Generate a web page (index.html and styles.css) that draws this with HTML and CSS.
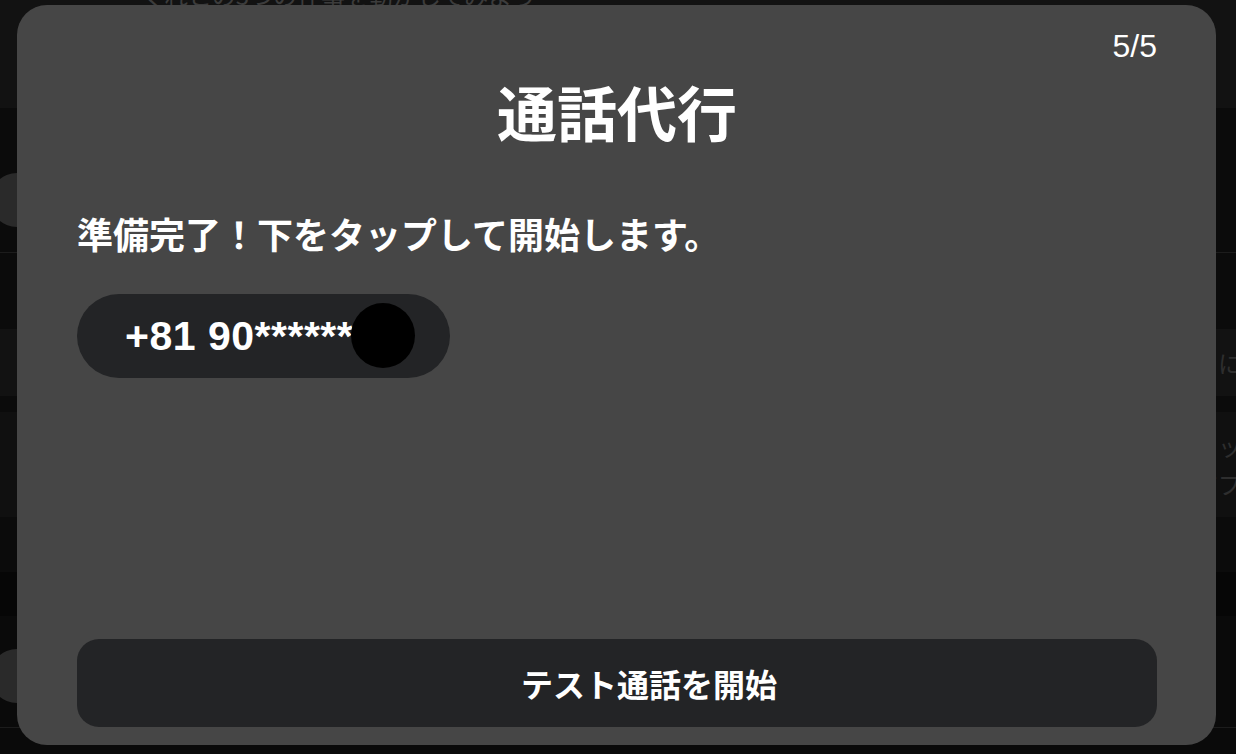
FILE: index.html
```html
<!DOCTYPE html>
<html lang="ja">
<head>
    <meta charset="UTF-8">
    <meta name="viewport" content="width=device-width, initial-scale=1.0">
    <title>通話代行</title>
    <link rel="stylesheet" href="styles.css">
</head>
<body>
    <div class="page">
        <div class="page-top">
            <p class="page-top-text">くれとの3つの仕事を動かしてみよう</p>
        </div>
        <div class="page-row page-row-first">
            <div class="avatar"></div>
        </div>
        <div class="page-gap"></div>
        <div class="page-band page-band-small">
            <span class="band-text">には</span>
        </div>
        <div class="page-gap page-gap-thin"></div>
        <div class="page-band page-band-large">
            <span class="band-text">タッチ</span>
            <span class="band-text">アプリ</span>
        </div>
        <div class="page-gap page-gap-mid"></div>
        <div class="page-band page-band-dark"></div>
        <div class="page-row page-row-last">
            <div class="avatar"></div>
        </div>
    </div>

    <div class="modal">
        <div class="modal-head">
            <span class="step-count">5/5</span>
        </div>
        <h1 class="modal-title">通話代行</h1>
        <p class="modal-text">準備完了！下をタップして開始します。</p>
        <div class="phone-pill">
            <span class="phone-number">+81 90******</span>
            <span class="phone-dot"></span>
        </div>
        <button class="start-btn">テスト通話を開始</button>
    </div>
</body>
</html>
```

FILE: styles.css
```css
* {
    box-sizing: border-box;
    margin: 0;
    padding: 0;
}

body {
    background: #0a0a0a;
    font-family: "Noto Sans CJK JP", "Liberation Sans", sans-serif;
    color: #fff;
    overflow: hidden;
    height: 754px;
}

/* page behind the modal */
.page {
    display: flex;
    flex-direction: column;
}

.page-top {
    height: 108px;
    background: #121212;
    padding-left: 140px;
    overflow: hidden;
}

.page-top-text {
    margin-top: -20px;
    font-size: 24px;
    line-height: 30px;
    color: #3c3c3c;
}

.page-row {
    position: relative;
    border-bottom: 1px solid #1c1c1c;
}

.page-row-first {
    height: 145px;
    background: #0b0b0b;
}

.page-row-last {
    height: 112px;
    background: #0a0a0a;
}

.avatar {
    position: absolute;
    left: -10px;
    width: 54px;
    height: 54px;
    border-radius: 50%;
    background: #2a2a2a;
}

.page-row-first .avatar {
    top: 65px;
}

.page-row-last .avatar {
    top: 33px;
}

.page-gap {
    height: 76px;
    background: #0b0b0b;
}

.page-gap-thin {
    height: 16px;
}

.page-gap-mid {
    height: 55px;
}

.page-band {
    display: flex;
    flex-direction: column;
    justify-content: center;
    align-items: flex-end;
    gap: 8px;
    margin-right: -30px;
}

.page-band-small {
    height: 67px;
    background: #121212;
}

.page-band-large {
    height: 105px;
    background: #101010;
}

.page-band-dark {
    height: 44px;
    background: #060606;
}

.band-text {
    font-size: 24px;
    line-height: 30px;
    color: #2e2e2e;
}

/* modal */
.modal {
    position: fixed;
    top: 5px;
    left: 17px;
    width: 1199px;
    height: 740px;
    background: #464646;
    border-radius: 30px;
    padding: 23px 59px 18px 60px;
    display: flex;
    flex-direction: column;
    align-items: flex-start;
}

.modal-head {
    width: 100%;
    display: flex;
    justify-content: flex-end;
}

.step-count {
    font-family: "Liberation Sans", sans-serif;
    font-size: 32px;
    line-height: 36px;
    color: #fff;
}

.modal-title {
    align-self: center;
    margin-top: 11px;
    font-size: 60px;
    line-height: 72px;
    font-weight: 700;
}

.modal-text {
    margin-top: 65px;
    font-size: 36px;
    line-height: 43px;
    font-weight: 700;
}

.phone-pill {
    position: relative;
    margin-top: 39px;
    width: 373px;
    height: 84px;
    padding-left: 48px;
    display: flex;
    align-items: center;
    background: #232426;
    border-radius: 42px;
}

.phone-number {
    font-family: "Liberation Sans", sans-serif;
    font-size: 41px;
    font-weight: 700;
    line-height: 48px;
    letter-spacing: 0.5px;
}

.phone-dot {
    position: absolute;
    left: 274px;
    top: 9px;
    width: 64px;
    height: 65px;
    border-radius: 50%;
    background: #000;
}

.start-btn {
    margin-top: auto;
    width: 100%;
    height: 88px;
    padding-left: 64px;
    border: none;
    border-radius: 22px;
    background: #232426;
    color: #fff;
    font-family: "Noto Sans CJK JP", sans-serif;
    font-size: 32px;
    line-height: 40px;
    font-weight: 700;
    cursor: pointer;
}
```
